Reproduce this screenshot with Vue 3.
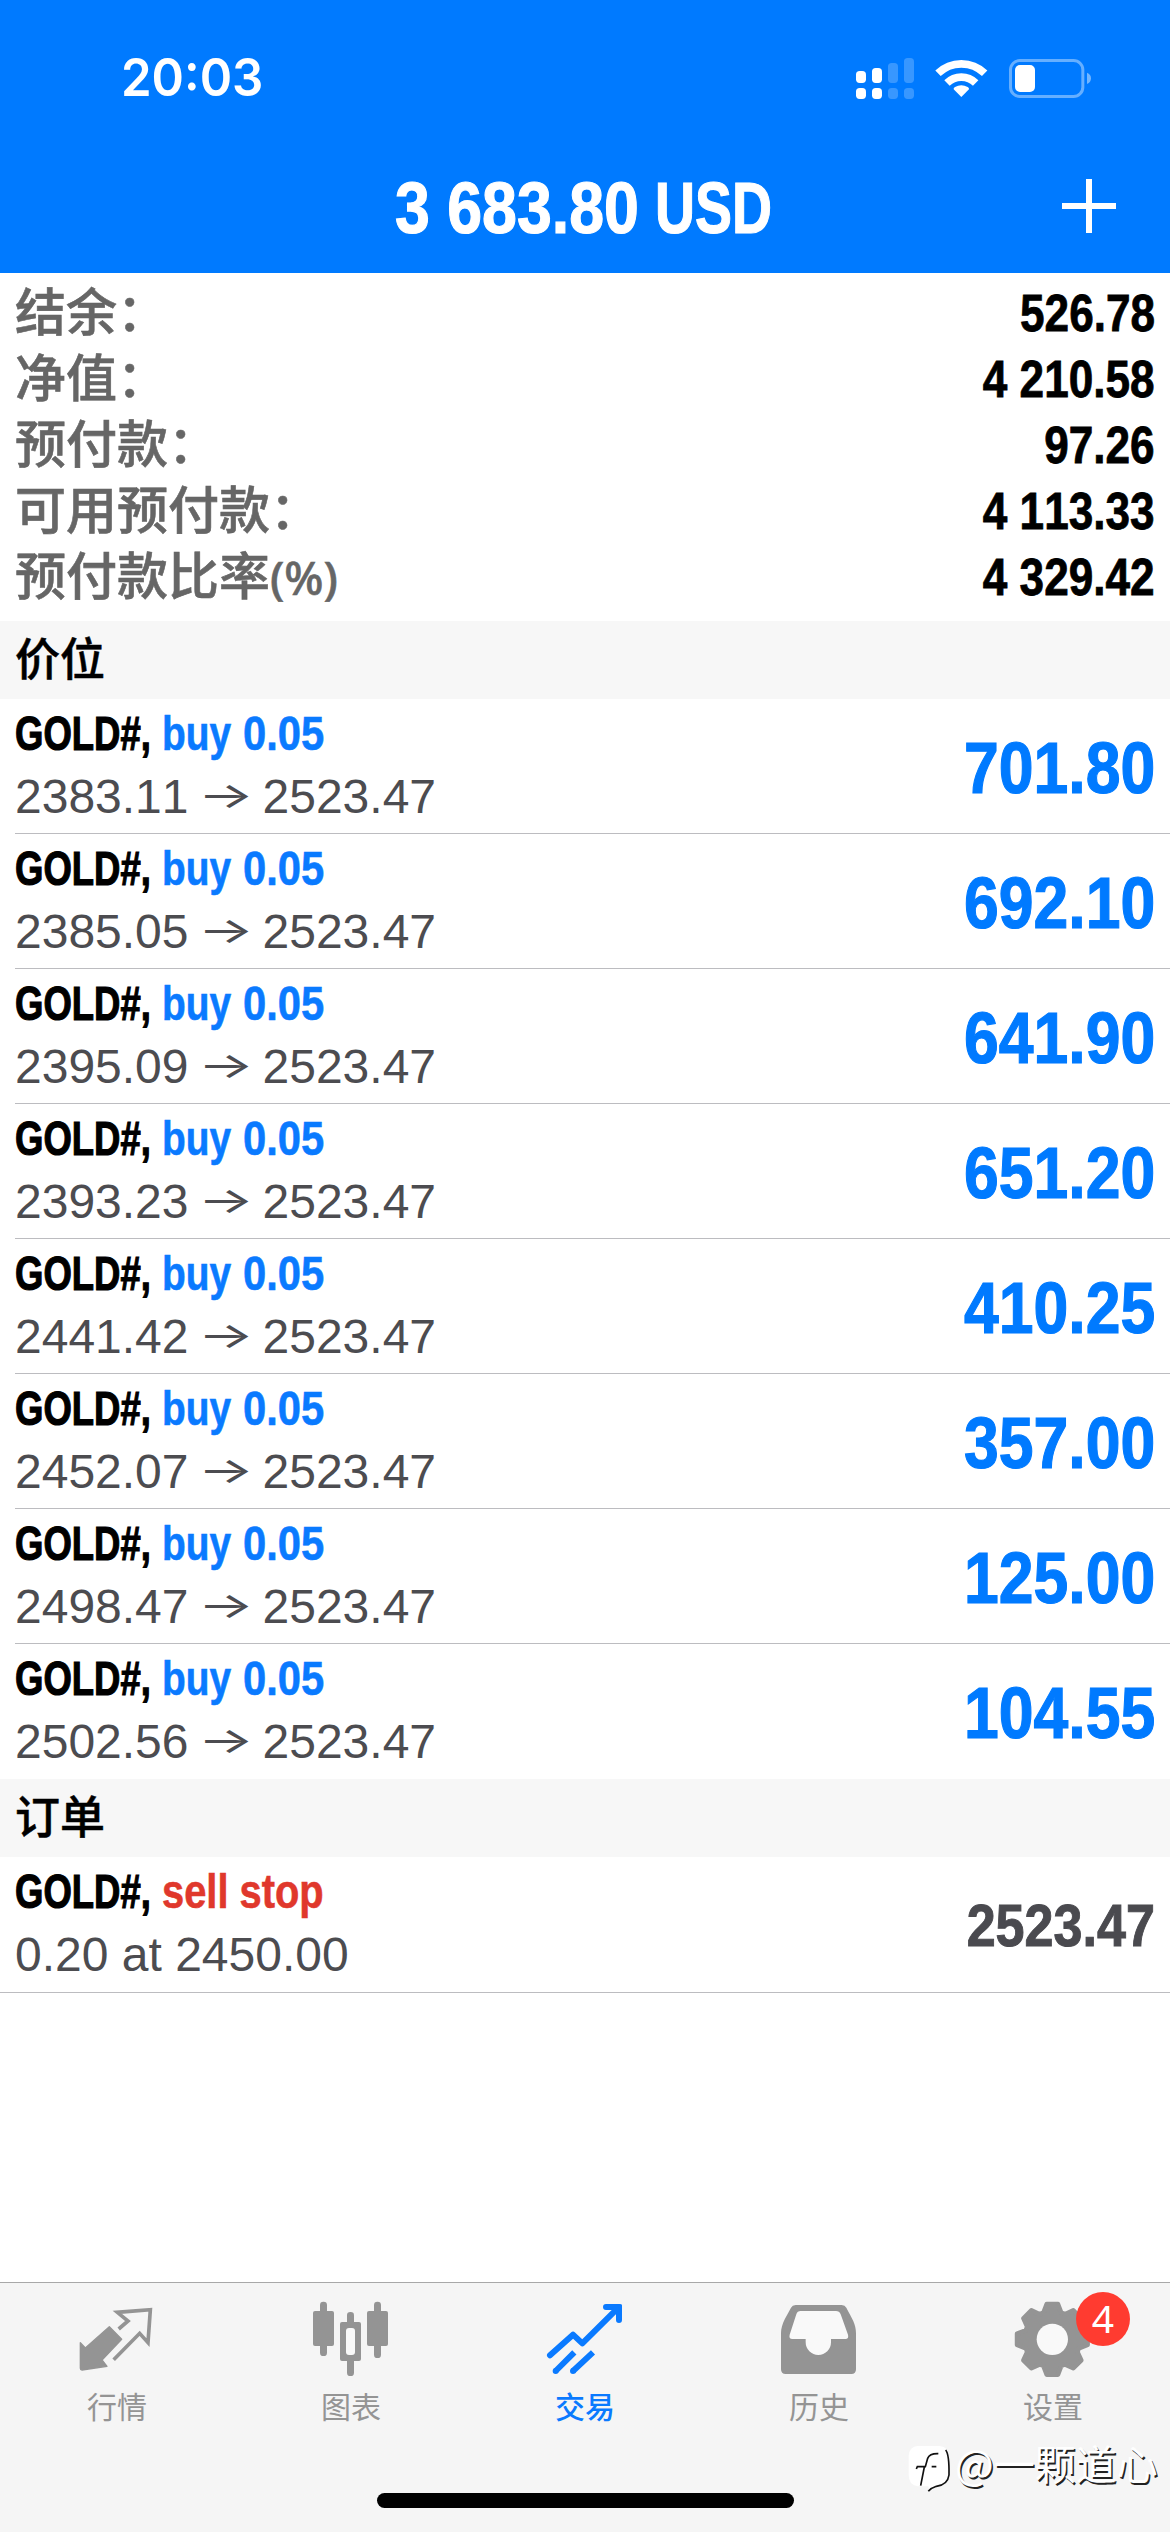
<script setup>
const summary = [
  { label: '结余：', value: '526.78' },
  { label: '净值：', value: '4 210.58' },
  { label: '预付款：', value: '97.26' },
  { label: '可用预付款：', value: '4 113.33' },
  { label: '预付款比率', unit: '(%)', value: '4 329.42' },
]

const positions = [
  { open: '2383.11', profit: '701.80' },
  { open: '2385.05', profit: '692.10' },
  { open: '2395.09', profit: '641.90' },
  { open: '2393.23', profit: '651.20' },
  { open: '2441.42', profit: '410.25' },
  { open: '2452.07', profit: '357.00' },
  { open: '2498.47', profit: '125.00' },
  { open: '2502.56', profit: '104.55' },
]

const polar = (r, deg) => {
  const a = (deg * Math.PI) / 180
  return `${(517 + r * Math.sin(a)).toFixed(1)},${(208 - r * Math.cos(a)).toFixed(1)}`
}
const gearPoints = Array.from({ length: 8 }, (_, i) => i * 45)
  .flatMap((t) => [polar(84, t - 18.5), polar(107, t - 9), polar(107, t + 9), polar(84, t + 18.5)])
  .join(' ')
</script>

<template>
  <div class="screen">
    <header class="top">
      <div class="status">
        <span class="time">20:03</span>
        <svg class="signal" viewBox="105 48 182 129">
          <g fill="#fff">
            <rect x="108" y="90" width="30" height="36" rx="11" />
            <rect x="156" y="81" width="30" height="45" rx="11" />
            <rect x="108" y="141" width="30" height="33" rx="11" />
            <rect x="156" y="141" width="30" height="33" rx="11" />
          </g>
          <g fill="#fff" opacity=".22">
            <rect x="204" y="66" width="30" height="60" rx="11" />
            <rect x="252" y="51" width="30" height="75" rx="11" />
            <rect x="204" y="141" width="30" height="33" rx="11" />
            <rect x="252" y="141" width="30" height="33" rx="11" />
          </g>
        </svg>
        <svg class="wifi" viewBox="345 51 159 120">
          <g fill="none" stroke="#fff" stroke-width="23">
            <path d="M354 97 A100 100 0 0 1 494 97" />
            <path d="M381 126 A61 61 0 0 1 467 126" />
          </g>
          <path d="M424 168 L401 145 Q400 141 405 138 Q424 127 443 138 Q448 141 447 145 Z" fill="#fff" />
        </svg>
        <svg class="battery" viewBox="564 51 255 123">
          <rect x="571.500" y="58.500" width="217" height="108" rx="28" fill="none" stroke="#fff" stroke-opacity=".4" stroke-width="9" />
          <rect x="585" y="72" width="60" height="81" rx="15" fill="#fff" />
          <path d="M801 95 Q813 100 813 112 Q813 124 801 129 Z" fill="#fff" opacity=".45" />
        </svg>
      </div>
      <div class="title">
        <span class="title-num">3 683.80</span>
        <span class="title-cur">USD</span>
        <svg class="plus" viewBox="0 0 54 54"><path d="M27 0V54M0 27H54" stroke="#fff" stroke-width="6" /></svg>
      </div>
    </header>

    <section class="summary">
      <div v-for="s in summary" :key="s.label" class="line">
        <span class="label">{{ s.label }}<span v-if="s.unit" class="unit">{{ s.unit }}</span></span>
        <span class="value">{{ s.value }}</span>
      </div>
    </section>

    <h2 class="section">价位</h2>
    <ul class="list">
      <li v-for="p in positions" :key="p.open" class="row">
        <div class="info">
          <div class="name"><span class="symbol">GOLD#,</span><span class="side">buy</span><span class="lots">0.05</span></div>
          <div class="price"><span>{{ p.open }}</span><span class="arrow">→</span><span>2523.47</span></div>
        </div>
        <span class="profit">{{ p.profit }}</span>
      </li>
    </ul>

    <h2 class="section">订单</h2>
    <div class="row order">
      <div class="info">
        <div class="name"><span class="symbol">GOLD#,</span><span class="sell">sell stop</span></div>
        <div class="price">0.20 at 2450.00</div>
      </div>
      <span class="current">2523.47</span>
    </div>

    <div class="space"></div>

    <nav class="tabs">
      <div class="tab">
        <svg class="icon" viewBox="96 90 270 240">
          <path d="M208 170 L245 208 L186 270 L201 289 L126 300 Q121 300 121 295 V218 L136 234 Z" fill="#949494" stroke="#949494" stroke-width="4" stroke-linejoin="round" />
          <path d="M236 177 L264 153 L232 127 L331 119 L324 218 L299 190 L221 269" fill="none" stroke="#949494" stroke-width="11" />
        </svg>
        <span>行情</span>
      </div>
      <div class="tab">
        <svg class="icon" viewBox="798 90 270 240" fill="#949494">
          <rect x="840" y="95" width="21" height="163" rx="10" />
          <rect x="819" y="123" width="63" height="105" rx="6" />
          <rect x="921" y="126" width="21" height="192" rx="10" />
          <rect x="900" y="156" width="63" height="117" rx="6" />
          <rect x="918" y="174" width="27" height="81" rx="9" fill="#f9f9f9" />
          <rect x="1002" y="95" width="21" height="169" rx="10" />
          <rect x="981" y="123" width="63" height="105" rx="6" />
        </svg>
        <span>图表</span>
      </div>
      <div class="tab active">
        <svg class="icon" viewBox="120 90 270 240" fill="none" stroke="#0a7aff" stroke-width="18">
          <path d="M150 256 L219 194 L247 220 L352 116" stroke-linecap="round" stroke-linejoin="round" />
          <path d="M318 111 H357 V150" stroke-linecap="round" stroke-linejoin="round" />
          <path d="M348 103 H362 Q366 103 366 107 V125 Z" fill="#0a7aff" stroke="none" />
          <path d="M167 303 L223 247 M219 303 L279 247" />
          <path d="M167 303 h.1 M219 303 h.1" stroke-linecap="round" />
        </svg>
        <span>交易</span>
      </div>
      <div class="tab">
        <svg class="icon" viewBox="822 90 270 240">
          <path d="M887 105 H1025 Q1035 105 1039 113 C1055 145 1068 160 1068 190 V298 Q1068 312 1054 312 H857 Q843 312 843 298 V190 C843 160 862 135 873 113 Q877 105 887 105 Z" fill="#949494" />
          <path d="M902 123 H1008 Q1018 123 1022 133 L1044 194 Q1047 207 1036 207 H993 V217 A38 38 0 0 1 917 217 V207 H877 Q866 207 869 194 L889 133 Q892 123 902 123 Z" fill="#f9f9f9" />
        </svg>
        <span>历史</span>
      </div>
      <div class="tab">
        <svg class="icon" viewBox="384 90 270 240">
          <polygon :points="gearPoints" fill="#949494" stroke="#949494" stroke-width="14" stroke-linejoin="round" />
          <circle cx="517" cy="208" r="47" fill="#f9f9f9" />
        </svg>
        <span>设置</span>
        <b class="badge">4</b>
      </div>
      <div class="home"></div>
      <div class="mark">
        <svg viewBox="80 525 132 146">
          <path d="M112 531 H178 Q205 533 205 562 V618 Q203 648 170 652 L148 668 L144 652 H112 Q85 648 85 618 V560 Q87 533 112 531 Z" fill="#fff" />
          <path d="M196 543 Q207 556 206 618 Q202 648 168 652 Q152 657 144 667" fill="none" stroke="#111" stroke-width="5" />
          <path d="M121 650 L132 594 M108 600 L111 593 H135 L142 568 Q148 553 174 554 M154 593 H168" fill="none" stroke="#111" stroke-width="5" />
        </svg>
        <span>@一颗道心</span>
      </div>
    </nav>
  </div>
</template>

<style>
body {
  margin: 0;
}
</style>

<style scoped>
.screen {
  width: 1170px;
  height: 2532px;
  display: flex;
  flex-direction: column;
  overflow: hidden;
  background: #fff;
  font-family: "Liberation Sans", "Noto Sans CJK SC", sans-serif;
  font-kerning: none;
}
.top {
  height: 273px;
  flex: none;
  background: #007aff;
  color: #fff;
}
.status {
  height: 156px;
  box-sizing: border-box;
  padding-left: 121px;
  display: flex;
  align-items: center;
}
.time {
  width: 734px;
  font: 600 52px/60px Inter, sans-serif;
  transform: scaleX(.945);
  transform-origin: left;
}
.signal {
  width: 60.67px;
  height: 43px;
}
.wifi {
  width: 53px;
  height: 40px;
  margin-left: 19.3px;
}
.battery {
  width: 85px;
  height: 41px;
  margin-left: 20px;
}
.title {
  height: 104px;
  padding-left: 395px;
  display: flex;
  align-items: center;
  font-size: 72px;
  font-weight: bold;
  white-space: nowrap;
  -webkit-text-stroke: 1.200px #fff;
}
.title-num {
  width: 260px;
  transform: scaleX(.87);
  transform-origin: left;
}
.title-cur {
  width: 407px;
  transform: scaleX(.77);
  transform-origin: left;
}
.plus {
  width: 54px;
  height: 54px;
  margin-top: -4px;
}
.summary {
  height: 348px;
  flex: none;
  box-sizing: border-box;
  padding: 7px 15px 0;
}
.line {
  height: 66px;
  display: flex;
  justify-content: space-between;
  align-items: center;
}
.label {
  padding-top: 2px;
  font-size: 51px;
  font-weight: 500;
  line-height: 64px;
  color: #666;
  -webkit-text-stroke: .600px #666;
}
.unit {
  font: 500 46px/50px "Noto Sans", sans-serif;
}
.value {
  font-size: 51px;
  font-weight: bold;
  transform: scaleX(.865);
  transform-origin: right;
  -webkit-text-stroke: .800px #000;
}
.section {
  height: 78px;
  flex: none;
  box-sizing: border-box;
  margin: 0;
  padding: 2px 0 0 15px;
  background: #f7f7f7;
  font-size: 45px;
  font-weight: 500;
  line-height: 76px;
  -webkit-text-stroke: .500px #000;
}
.list {
  margin: 0;
  padding: 0;
  list-style: none;
}
.row {
  height: 135px;
  flex: none;
  box-sizing: border-box;
  margin-left: 15px;
  padding: 3px 15px 0 0;
  display: flex;
  justify-content: space-between;
  border-bottom: 1px solid #bcbcc0;
}
.list .row:last-child {
  border-bottom-color: transparent;
}
.order {
  height: 136px;
  margin-left: 0;
  padding-left: 15px;
}
.name,
.price {
  height: 63px;
  display: flex;
  line-height: 64px;
  font-size: 48px;
  white-space: nowrap;
}
.name {
  font-weight: bold;
}
.name span {
  transform-origin: left;
}
.symbol {
  width: 147px;
  transform: scaleX(.76);
  -webkit-text-stroke: 1.200px #000;
}
.side,
.lots {
  color: #0a7aff;
  -webkit-text-stroke: .600px #0a7aff;
}
.side {
  width: 81px;
  transform: scaleX(.81);
}
.lots {
  transform: scaleX(.87);
}
.sell {
  color: #e0382c;
  transform: scaleX(.83);
  -webkit-text-stroke: .600px #e0382c;
}
.price {
  color: #4c4c50;
}
.arrow {
  width: 74px;
  text-align: center;
  font-family: Inter, sans-serif;
  font-weight: 400;
  transform: translateY(-2px) scale(1.23, .75);
}
.profit,
.current {
  font-weight: bold;
  line-height: 132px;
  transform: scaleX(.868);
  transform-origin: right;
}
.profit {
  font-size: 72px;
  color: #007aff;
  -webkit-text-stroke: 1.200px #007aff;
}
.current {
  font-size: 60px;
  color: #4a4a4f;
  -webkit-text-stroke: 1px #4a4a4f;
}
.space {
  flex: 1;
}
.tabs {
  position: relative;
  height: 250px;
  flex: none;
  box-sizing: border-box;
  border-top: 1px solid #a8a8a8;
  background: #f5f5f5;
  display: flex;
}
.tab {
  position: relative;
  width: 234px;
  padding-top: 17px;
  display: flex;
  flex-direction: column;
  align-items: center;
  color: #949494;
  font: 400 30px/44px "Noto Sans CJK SC", sans-serif;
}
.active {
  color: #0a7aff;
  font-weight: 500;
}
.icon {
  width: 90px;
  height: 80px;
  margin-bottom: 3px;
}
.badge {
  position: absolute;
  left: 140px;
  top: 9px;
  width: 54px;
  height: 54px;
  border-radius: 50%;
  background: #ff3b30;
  color: #fff;
  text-align: center;
  font: 400 39px/52px "Noto Sans", sans-serif;
}
.home {
  position: absolute;
  left: 377px;
  bottom: 24px;
  width: 417px;
  height: 15px;
  border-radius: 8px;
  background: #000;
}
.mark {
  position: absolute;
  left: 907px;
  top: 155px;
  display: flex;
  color: #fff;
  font: 400 41px/48px "Noto Sans CJK SC", sans-serif;
  text-shadow: 1.500px 1.500px 0 #222;
  white-space: nowrap;
}
.mark svg {
  width: 44px;
  height: 48.67px;
  margin: 6px 4px 0 0;
}
</style>
